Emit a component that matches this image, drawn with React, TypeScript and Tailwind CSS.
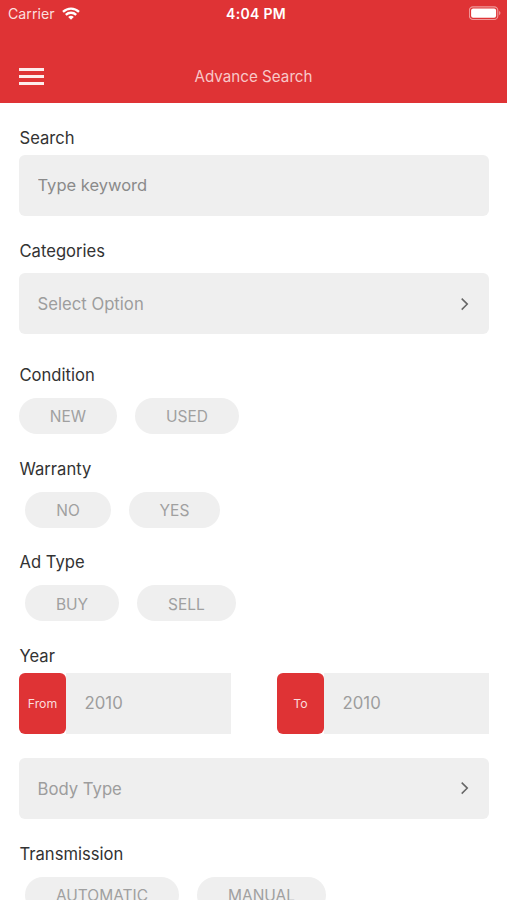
import { useState, type ReactNode } from "react";

type ChipOption = { label: string; width: string };

const conditions: ChipOption[] = [
  { label: "NEW", width: "w-[98px]" },
  { label: "USED", width: "w-[104px]" }
];
const warranties: ChipOption[] = [
  { label: "NO", width: "w-[86px]" },
  { label: "YES", width: "w-[91px]" }
];
const adTypes: ChipOption[] = [
  { label: "BUY", width: "w-[94px]" },
  { label: "SELL", width: "w-[99px]" }
];
const transmissions: ChipOption[] = [
  { label: "AUTOMATIC", width: "w-[154px]" },
  { label: "MANUAL", width: "w-[129px]" }
];

function WifiIcon() {
  return (
    <svg width="18" height="13" viewBox="0 0 18 13" fill="none" stroke="#fff" strokeWidth="2.3">
      <path d="M1 4.9C5.6 0.4 12.4 0.4 17 4.9" />
      <path d="M3.8 7.9C6.8 5 11.2 5 14.2 7.9" />
      <path d="M6.2 9.9C7.9 8.3 10.1 8.3 11.8 9.9L9 12.7Z" fill="#fff" stroke="none" />
    </svg>
  );
}

function BatteryIcon() {
  return (
    <svg width="33" height="15" viewBox="0 0 33 15" fill="none">
      <rect x="0.4" y="0.9" width="28.4" height="12.6" rx="3.6" stroke="#fff" strokeOpacity="0.5" strokeWidth="1.1" />
      <rect x="2.1" y="2.6" width="25" height="9.2" rx="2" fill="#fff" />
      <path d="M30.1 5.1C31.9 5.8 31.9 8.6 30.1 9.3Z" fill="#fff" fillOpacity="0.5" />
    </svg>
  );
}

function Chevron() {
  return (
    <svg width="8" height="14" viewBox="0 0 8 14" fill="none" stroke="#666666" strokeWidth="1.5">
      <path d="M0.7 1.6L6.3 7.1L0.7 12.6" />
    </svg>
  );
}

function Label({ children }: { children: ReactNode }) {
  return <div className="h-6 pl-[0.5px] text-[16.6px] leading-[23px] text-[#333333]">{children}</div>;
}

function SelectField({ placeholder }: { placeholder: string }) {
  return (
    <button
      type="button"
      className="flex h-[61px] w-full items-center justify-between rounded-md bg-[#efefef] pr-5 pl-[18.5px] text-[16.7px] text-[#9d9d9d]"
    >
      <span className="pt-0.5">{placeholder}</span>
      <Chevron />
    </button>
  );
}

function ChipRow({ options, inset = false }: { options: ChipOption[]; inset?: boolean }) {
  const [selected, setSelected] = useState<string | null>(null);
  return (
    <div className={inset ? "flex gap-[18px] pl-1.5" : "flex gap-[18px]"}>
      {options.map((o) => (
        <button
          key={o.label}
          type="button"
          onClick={() => setSelected(o.label)}
          className={`h-9 shrink-0 rounded-full pt-0.5 text-[15.5px] ${o.width} ${
            selected === o.label ? "bg-[#df3335] text-white" : "bg-[#efefef] text-[#a0a0a0]"
          }`}
        >
          {o.label}
        </button>
      ))}
    </div>
  );
}

function YearField({ label }: { label: string }) {
  return (
    <div className="flex h-[61px] w-[211.5px] bg-[#efefef]">
      <div className="bg-white">
        <div className="flex h-full w-[47px] items-center justify-center rounded-md bg-[#df3335] pt-px text-[12.3px] text-[#fbdcdc]">
          {label}
        </div>
      </div>
      <input
        placeholder="2010"
        className="w-full min-w-0 bg-transparent pl-[18.5px] text-[16.8px] outline-none placeholder:text-[#9d9d9d]"
      />
    </div>
  );
}

export default function AdvanceSearch() {
  return (
    <div className="h-[900px] w-full overflow-hidden bg-white font-['Inter','Liberation_Sans',sans-serif]">
      <header className="h-[103px] bg-[#df3335] text-white">
        <div className="grid h-[27px] grid-cols-3 items-center pr-[5px] pl-2">
          <div className="flex items-center gap-[7px] text-[14.2px] text-[#fbdfdf]">
            Carrier
            <WifiIcon />
          </div>
          <div className="pl-0.5 text-center text-[14px] font-semibold tracking-[0.3px]">4:04 PM</div>
          <div className="flex justify-end">
            <BatteryIcon />
          </div>
        </div>
        <div className="mt-[36px] grid h-[27px] grid-cols-[25px_1fr_25px] items-center px-[19px]">
          <button type="button" className="flex flex-col gap-1">
            <span className="h-[3px] w-[25px] bg-[#fdecec]" />
            <span className="h-[3px] w-[25px] bg-[#fdecec]" />
            <span className="h-[3px] w-[25px] bg-[#fdecec]" />
          </button>
          <h1 className="pt-0.5 text-center text-[15.2px] text-[#f8c8c8]">Advance Search</h1>
        </div>
      </header>

      <main className="pr-[18.5px] pl-[19px] pt-6">
        <Label>Search</Label>
        <div className="mt-1">
          <input
            placeholder="Type keyword"
            className="h-[61px] w-full rounded-md bg-[#efefef] pb-0.5 pl-[18.5px] text-[16.5px] outline-none placeholder:text-[#8a8a8a]"
          />
        </div>

        <div className="mt-6">
          <Label>Categories</Label>
          <div className="mt-[9.3px]">
            <SelectField placeholder="Select Option" />
          </div>
        </div>

        <div className="mt-[29.7px] flex flex-col gap-[23.7px]">
          <div className="space-y-[10px]">
            <Label>Condition</Label>
            <ChipRow options={conditions} />
          </div>
          <div className="space-y-[10px]">
            <Label>Warranty</Label>
            <ChipRow options={warranties} inset />
          </div>
          <div className="space-y-[10px]">
            <Label>Ad Type</Label>
            <ChipRow options={adTypes} inset />
          </div>
        </div>

        <div className="mt-[23.6px]">
          <Label>Year</Label>
          <div className="mt-1 flex justify-between">
            <YearField label="From" />
            <YearField label="To" />
          </div>
        </div>

        <div className="mt-6">
          <SelectField placeholder="Body Type" />
        </div>

        <div className="mt-6 space-y-[10px]">
          <Label>Transmission</Label>
          <ChipRow options={transmissions} inset />
        </div>
      </main>
    </div>
  );
}
